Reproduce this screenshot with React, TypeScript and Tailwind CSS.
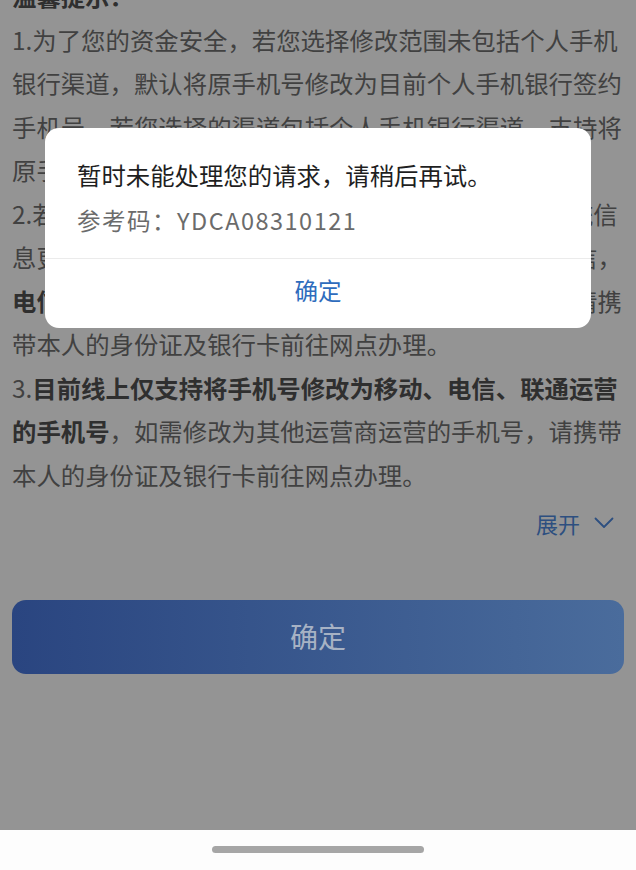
import React from 'react';

const font = { fontFamily: '"Noto Sans CJK SC", "Noto Sans", sans-serif' };

function Notice() {
  return (
    <div className="-mt-[26px] px-3 text-[24.4px] leading-[43.5px] text-[#414141]">
      <p className="font-bold text-[#2f2f2f]">温馨提示：</p>
      <p>
        1.为了您的资金安全，若您选择修改范围未包括个人手机银行渠道，默认将原手机号修改为目前个人手机银行签约手机号，若您选择的渠道包括个人手机银行渠道，支持将原手机号修改为新手机号。
      </p>
      <p>
        2.若您的手机号已更换无法接收短信，请及时修改系统信息更新，修改后将以新号码接收动账通知及验证码短信，
        <span className="font-bold text-[#2f2f2f]">电信、联通运营的手机号</span>
        ，如需修改为其他手机号，请携带本人的身份证及银行卡前往网点办理。
      </p>
      <p>
        3.
        <span className="font-bold text-[#2f2f2f]">目前线上仅支持将手机号修改为移动、电信、联通运营的手机号</span>
        ，如需修改为其他运营商运营的手机号，请携带本人的身份证及银行卡前往网点办理。
      </p>
      <div className="mt-[12px] flex justify-end pr-[10px]">
        <button className="flex items-center gap-[14px] text-[22px] leading-[30px] text-[#2d4f80]">
          展开
          <svg width="20" height="12" viewBox="0 0 20 12" fill="none">
            <path d="M1.5 1.5 L10 10 L18.5 1.5" stroke="#2d4f80" strokeWidth="1.8" strokeLinecap="round" strokeLinejoin="round" />
          </svg>
        </button>
      </div>
      <div className="mt-[62px]">
        <button className="flex h-[74px] w-full items-center justify-center rounded-[14px] bg-gradient-to-r from-[#2a4580] to-[#4a6c9c] text-[28px] text-[#a7b2c4]">
          确定
        </button>
      </div>
    </div>
  );
}

function ErrorDialog() {
  return (
    <div className="absolute left-[45px] top-[128px] w-[546px] overflow-hidden rounded-[14px] bg-white">
      <div className="px-[32px] pt-[30px] pb-[22px]">
        <p className="text-[24.4px] leading-[34px] text-[#1f1f1f]">暂时未能处理您的请求，请稍后再试。</p>
        <p className="mt-[12px] text-[23.5px] leading-[32px] tracking-[1.5px] text-[#6b6b6b]">参考码：YDCA08310121</p>
      </div>
      <div className="h-px bg-[#ebebeb]" />
      <button className="flex h-[69px] w-full items-center justify-center pb-[6px] text-[23.5px] text-[#2e6cbd]">
        确定
      </button>
    </div>
  );
}

export default function App() {
  return (
    <div className="flex h-[870px] w-full flex-col overflow-hidden" style={font}>
      <div className="relative h-[830px] overflow-hidden bg-[#949494]">
        <Notice />
        <ErrorDialog />
      </div>
      <div className="flex flex-1 items-center justify-center bg-[#fdfdfd]">
        <div className="mt-[-2px] h-[7px] w-[212px] rounded-full bg-[#a6a6a6]" />
      </div>
    </div>
  );
}
